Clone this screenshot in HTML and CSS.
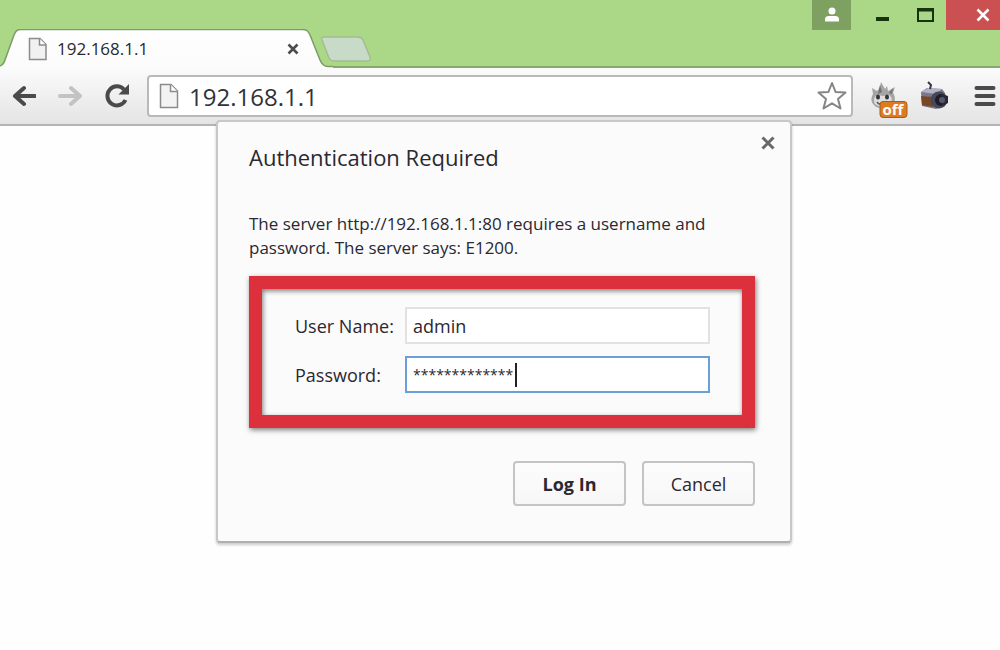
FILE: index.html
```html
<!DOCTYPE html>
<html lang="en">
<head>
    <meta charset="utf-8">
    <title>192.168.1.1</title>
    <link rel="stylesheet" href="styles.css">
</head>
<body>
    <header class="tab-strip">
        <div class="tab">
            <svg class="tab-shape" width="333" height="39" viewBox="0 0 333 39" aria-hidden="true">
                <defs>
                    <linearGradient id="tabFill" x1="0" y1="0" x2="0" y2="1">
                        <stop offset="0" stop-color="#ffffff"/>
                        <stop offset="1" stop-color="#fbfbfc"/>
                    </linearGradient>
                </defs>
                <path d="M0 39V37C3 36 4 34 5 31L14 6C16 1.500 17 .500 21 .500H302C307 .500 308 2 310 6L320 31C322 36 324 37.500 328 37.500H333V39Z" fill="url(#tabFill)"/>
                <path d="M0 37C3 36 4 34 5 31L14 6C16 1.500 17 .500 21 .500H302C307 .500 308 2 310 6L320 31C322 36 324 37.500 328 37.500H333" fill="none" stroke="#7f9a68" stroke-width="1.500"/>
            </svg>
            <div class="tab-content">
                <svg width="20" height="24" viewBox="0 0 20 24" aria-hidden="true">
                    <path d="M1.500 1.500H12L18 7.500V22.500H1.500Z" fill="#f1f1f1" stroke="#8b8b8b" stroke-width="1.500"/>
                    <path d="M11.500 1.500V8H18" fill="#fff" stroke="#8b8b8b" stroke-width="1.500"/>
                </svg>
                <span class="tab-title">192.168.1.1</span>
                <button class="icon-button" type="button" aria-label="Close tab">
                    <svg width="12" height="12" viewBox="0 0 12 12"><path d="M1.500 1.500L10.500 10.500M10.500 1.500L1.500 10.500" stroke="#4c4c50" stroke-width="2.600"/></svg>
                </button>
            </div>
        </div>
        <button class="icon-button new-tab" type="button" aria-label="New tab">
            <svg width="52" height="26" viewBox="0 0 52 26"><path d="M4 1H38C41 1 42 2 43 4L50 21C51 24 50 25 47 25H14C11 25 10 24 9 22L2 4C1 2 2 1 4 1Z" fill="#c8dac8" stroke="#a2bd92" stroke-width="1.500"/></svg>
        </button>
        <div class="window-controls">
            <button class="icon-button control user" type="button" aria-label="Profile">
                <svg width="14" height="16" viewBox="0 0 14 16"><circle cx="7" cy="4" r="3.500" fill="#fff"/><path d="M0 14.500V12C0 9.500 2.500 9 5 9H9C11.500 9 14 9.500 14 12V14.500Z" fill="#fff"/></svg>
            </button>
            <button class="icon-button control minimize" type="button" aria-label="Minimize">
                <svg width="14" height="14" viewBox="0 0 14 14"><rect x="1" y="9" width="13" height="4" fill="#17330d"/></svg>
            </button>
            <button class="icon-button control maximize" type="button" aria-label="Maximize">
                <svg width="17" height="14" viewBox="0 0 17 14"><path d="M1 1H16V13H1Z" fill="#aad886" stroke="#17330d" stroke-width="2"/><path d="M1 2H16" stroke="#17330d" stroke-width="3"/></svg>
            </button>
            <button class="icon-button control close" type="button" aria-label="Close">
                <svg width="14" height="14" viewBox="0 0 14 14"><path d="M1.500 1.500L12.500 12.500M12.500 1.500L1.500 12.500" stroke="#fff" stroke-width="2.600"/></svg>
            </button>
        </div>
    </header>

    <nav class="toolbar">
        <div class="nav-buttons">
            <button class="icon-button" type="button" aria-label="Back">
                <svg width="24" height="24" viewBox="0 0 24 24"><path d="M23 12H4M12 4L3 12L12 20" fill="none" stroke="#4a4a4a" stroke-width="4" stroke-linecap="round" stroke-linejoin="round"/></svg>
            </button>
            <button class="icon-button" type="button" aria-label="Forward">
                <svg width="24" height="24" viewBox="0 0 24 24"><path d="M2 12H21M13 4L22 12L13 20" fill="none" stroke="#c3c3c3" stroke-width="4" stroke-linecap="round" stroke-linejoin="round"/></svg>
            </button>
            <button class="icon-button" type="button" aria-label="Reload">
                <svg width="26" height="26" viewBox="0 0 26 26"><path d="M20 6.500A9.500 9.500 0 1 0 21.500 17" fill="none" stroke="#4a4a4a" stroke-width="4"/><path d="M25 1V11.500H14.500Z" fill="#4a4a4a"/></svg>
            </button>
        </div>
        <div class="address-bar">
            <svg width="20" height="26" viewBox="0 0 20 26" aria-hidden="true">
                <path d="M1.500 1.500H12L18.500 8V24.500H1.500Z" fill="#f3f3f3" stroke="#8b8b8b" stroke-width="1.500"/>
                <path d="M11.500 1.500V8.500H18.500" fill="#fff" stroke="#8b8b8b" stroke-width="1.500"/>
            </svg>
            <input class="address" type="text" value="192.168.1.1" aria-label="Address">
            <button class="icon-button" type="button" aria-label="Bookmark this page">
                <svg width="30" height="30" viewBox="0 0 30 30"><path d="M15 2L18.600 11L28.500 11.500L21 18L23.500 27.500L15 22.300L6.500 27.500L9 18L1.500 11.500L11.400 11Z" fill="#fff" stroke="#858585" stroke-width="2" stroke-linejoin="round"/></svg>
            </button>
        </div>
        <div class="extensions">
            <button class="icon-button" type="button" aria-label="Blocker off">
                <svg class="blocker" width="38" height="44" viewBox="0 0 38 44">
                    <path d="M3 30C0 26 2 22 3 20L2 14L7 17C9 15 10 13 11 8L15 15L17 12L18 17L25 13L23 19C26 23 25 28 23 31L15 34C10 35 6 34 3 30Z" fill="#a5a5a5"/>
                    <path d="M5 30C3 26 4 22 8 21L13 22L19 21C23 23 22 28 20 31L12 34Z" fill="#dedede"/>
                    <path d="M10 11L12 18L8 20ZM23 14L19 19L22 20Z" fill="#737373"/>
                    <ellipse cx="8" cy="23" rx="2" ry="2.500" fill="#333"/><ellipse cx="17" cy="23" rx="2" ry="2.500" fill="#333"/>
                    <path d="M7 28C9 31 12 31 15 28" fill="none" stroke="#555" stroke-width="1.500"/>
                    <rect x="10" y="27.500" width="27" height="16" rx="3" fill="#dc7b22" stroke="#a95c18"/>
                    <text class="badge-text" x="23" y="41" text-anchor="middle">off</text>
                </svg>
            </button>
            <button class="icon-button" type="button" aria-label="Screen capture">
                <svg width="30" height="30" viewBox="0 0 30 30">
                    <path d="M1 11L7 7L22 8L25 12V25L16 28L2 25Z" fill="#77788a"/>
                    <path d="M1 11L8 7L22 8L16 13Z" fill="#b1b2c4"/>
                    <path d="M1 15L13 16V26L2 24Z" fill="#794725"/>
                    <path d="M10 8L11 4L8 1" fill="none" stroke="#36363f" stroke-width="2"/>
                    <circle cx="19" cy="19" r="8.500" fill="#45475a"/>
                    <circle cx="21" cy="19" r="6" fill="#1c1d27"/>
                    <path d="M21 13L28 15V22L22 25Z" fill="#292a35"/>
                    <circle cx="22" cy="19" r="3" fill="#55596b"/>
                </svg>
            </button>
            <button class="icon-button menu" type="button" aria-label="Menu">
                <svg width="22" height="22" viewBox="0 0 22 22"><path d="M2.500 3H19.500M2.500 11H19.500M2.500 19H19.500" stroke="#4a4a4a" stroke-width="4" stroke-linecap="round"/></svg>
            </button>
        </div>
    </nav>

    <main class="page">
        <form class="dialog">
            <div class="dialog-header">
                <h1>Authentication Required</h1>
                <button class="icon-button" type="button" aria-label="Close dialog">
                    <svg width="14" height="14" viewBox="0 0 14 14"><path d="M1.500 1.500L12.500 12.500M12.500 1.500L1.500 12.500" stroke="#686868" stroke-width="3"/></svg>
                </button>
            </div>
            <p class="message">The server http://192.168.1.1:80 requires a username and password. The server says: E1200.</p>
            <div class="highlight">
                <label for="username">User Name:</label>
                <input type="text" id="username" value="admin">

                <label for="password">Password:</label>
                <div class="password-field">
                    <input type="text" id="password" value="*************" autocomplete="off">
                    <span class="caret"></span>
                </div>
            </div>
            <div class="actions">
                <button class="login" type="submit">Log In</button>
                <button type="button">Cancel</button>
            </div>
        </form>
    </main>
</body>
</html>
```
FILE: styles.css
```css
* {
    box-sizing: border-box;
}

body {
    margin: 0;
    min-height: 100vh;
    background-color: #fefefe;
    color: #2b2830;
    font-family: "Open Sans", "Noto Sans", sans-serif;
    font-size: 17px;
}

.icon-button {
    display: flex;
    flex: none;
    padding: 0;
    border: none;
    background: none;
    cursor: pointer;
}

/* Tabs and window controls */
.tab-strip {
    display: flex;
    align-items: flex-end;
    height: 68px;
    background-color: #aad886;
    box-shadow: inset 0 -2px 0 #88a86c;
}

.tab {
    display: grid;
}

.tab-shape,
.tab-content {
    grid-area: 1 / 1;
}

.tab-content {
    display: flex;
    align-items: center;
    gap: 9px;
    padding: 0 34px 0 28px;
}

.tab-title {
    flex: 1;
}

.new-tab {
    margin: 0 0 6px -13px;
}

.window-controls {
    display: flex;
    align-self: flex-start;
    margin-left: auto;
}

.control {
    align-items: center;
    justify-content: center;
    height: 30px;
}

.user {
    width: 39px;
    background-color: #7ea162;
}

.minimize {
    width: 62px;
}

.maximize {
    width: 24px;
}

.close {
    width: 54px;
    margin-left: 9px;
    padding-left: 20px;
    background-color: #cb5052;
}

/* Toolbar */
.toolbar {
    display: flex;
    align-items: center;
    gap: 17px;
    height: 58px;
    padding: 0 4px 0 12px;
    background: linear-gradient(#fbfbfc, #e4e4e4);
    border-bottom: 2px solid #b4b4b4;
}

.nav-buttons {
    display: flex;
    align-items: center;
    gap: 22px;
}

.extensions {
    display: flex;
    align-items: center;
    gap: 12px;
}

.address-bar {
    display: flex;
    flex: 1;
    align-items: center;
    height: 42px;
    padding: 0 4px 0 10px;
    background-color: white;
    border: 2px solid #b9b9b9;
    border-radius: 4px;
}

.address {
    flex: 1;
    min-width: 0;
    padding: 0 10px;
    border: none;
    background: none;
    color: #303338;
    font-family: inherit;
    font-size: 24px;
}

.blocker {
    overflow: visible;
}

.badge-text {
    fill: white;
    font-family: "Open Sans", sans-serif;
    font-size: 15px;
    font-weight: bold;
}

.menu {
    margin-left: 12px;
}

/* Login dialog */
.page {
    display: flex;
    justify-content: center;
    padding-left: 8px;
}

.dialog {
    width: 576px;
    margin-top: -6px;
    padding: 20px 35px 35px 31px;
    background-color: #fbfbfb;
    border: 2px solid #c8c8c8;
    border-bottom-color: #b0b0b0;
    border-radius: 4px;
    box-shadow: 0 2px 3px rgba(0, 0, 0, 0.2);
}

.dialog-header {
    display: flex;
    align-items: flex-start;
    justify-content: space-between;
    margin-right: -20px;
}

.dialog-header .icon-button {
    margin-top: -6px;
}

h1 {
    margin: 0;
    font-size: 22px;
    font-weight: normal;
    line-height: 30px;
}

.message {
    margin: 40px 0 16px;
    line-height: 24px;
}

.highlight {
    display: grid;
    grid-template-columns: 98px 1fr;
    align-items: center;
    gap: 12px;
    padding: 18px 32px 22px 33px;
    border: 13px solid #dc303c;
    box-shadow: 1px 2px 5px rgba(0, 0, 0, 0.5), inset 1px 2px 5px rgba(0, 0, 0, 0.5);
}

.highlight label {
    font-size: 18px;
    white-space: nowrap;
}

.highlight input {
    width: 100%;
    height: 37px;
    padding: 0 6px;
    border: 2px solid #e2e2e2;
    background-color: white;
    color: inherit;
    font-family: inherit;
    font-size: 18px;
}

.password-field {
    position: relative;
}

.password-field input {
    border-color: #6b9fd8;
    font-size: 14px;
}

.caret {
    position: absolute;
    top: 7px;
    left: 110px;
    width: 2px;
    height: 24px;
    background-color: #222;
}

.actions {
    display: flex;
    justify-content: flex-end;
    gap: 16px;
    margin-top: 33px;
}

.actions button {
    width: 113px;
    height: 45px;
    border: 2px solid #c4c4c4;
    border-radius: 4px;
    background: linear-gradient(#fcfcfc, #f7f7f7);
    color: inherit;
    font-family: inherit;
    font-size: 18px;
    cursor: pointer;
}

.actions .login {
    font-weight: bold;
}
```
